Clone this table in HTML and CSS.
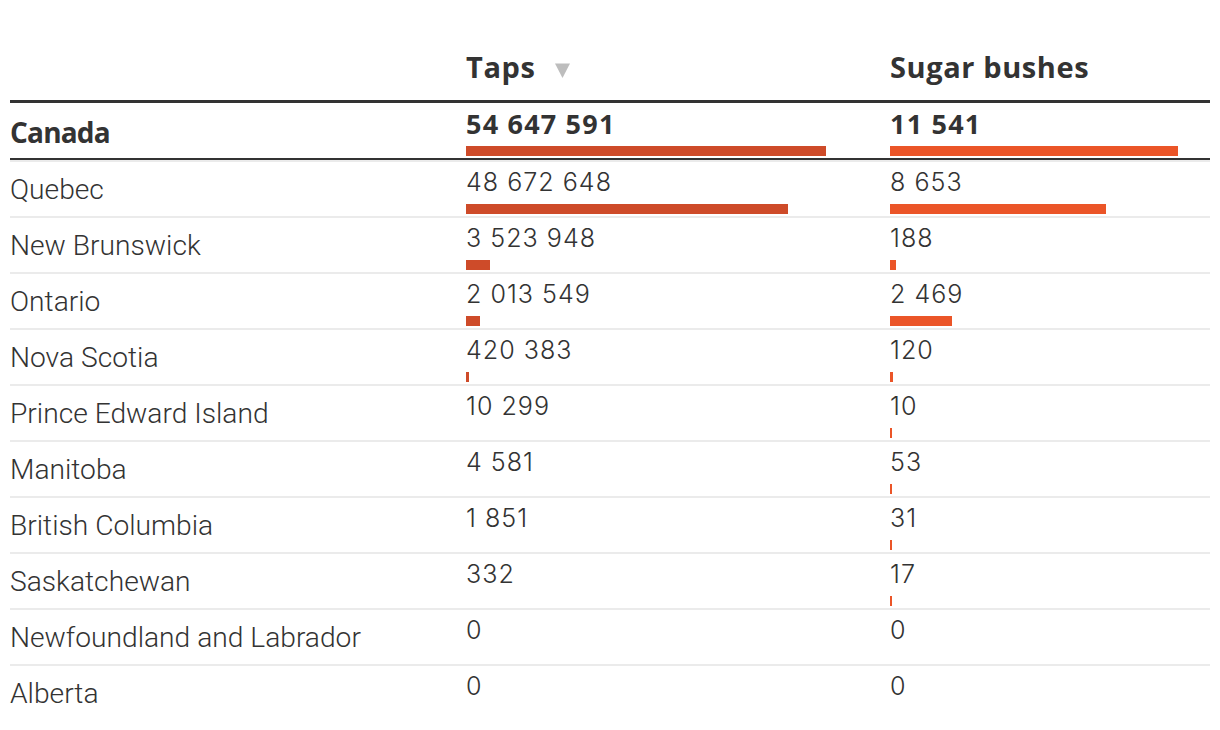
FILE: index.html
```html
<!DOCTYPE html>
<html lang="en">
<head>
<meta charset="utf-8">
<title>Maple syrup production by province</title>
<link rel="stylesheet" href="styles.css">
</head>
<body>
<div class="table">
  <div class="row head">
    <div class="cell"></div>
    <div class="cell th">Taps<svg class="sort" width="15" height="15" viewBox="0 0 15 15" aria-hidden="true"><path d="M0 0.5H15L7.5 15Z" fill="#bdbdbd"/></svg></div>
    <div class="cell th">Sugar bushes</div>
  </div>
  <div class="row total">
    <div class="cell label">Canada</div>
    <div class="cell num"><div class="val">54 647 591</div><div class="bar taps" style="width:360px"></div></div>
    <div class="cell num"><div class="val">11 541</div><div class="bar sugar" style="width:288px"></div></div>
  </div>
  <div class="row">
    <div class="cell label">Quebec</div>
    <div class="cell num"><div class="val">48 672 648</div><div class="bar taps" style="width:322px"></div></div>
    <div class="cell num"><div class="val">8 653</div><div class="bar sugar" style="width:216px"></div></div>
  </div>
  <div class="row">
    <div class="cell label">New Brunswick</div>
    <div class="cell num"><div class="val">3 523 948</div><div class="bar taps" style="width:24px"></div></div>
    <div class="cell num"><div class="val">188</div><div class="bar sugar" style="width:6px"></div></div>
  </div>
  <div class="row">
    <div class="cell label">Ontario</div>
    <div class="cell num"><div class="val">2 013 549</div><div class="bar taps" style="width:14px"></div></div>
    <div class="cell num"><div class="val">2 469</div><div class="bar sugar" style="width:62px"></div></div>
  </div>
  <div class="row">
    <div class="cell label">Nova Scotia</div>
    <div class="cell num"><div class="val">420 383</div><div class="bar taps" style="width:3px"></div></div>
    <div class="cell num"><div class="val">120</div><div class="bar sugar" style="width:3px"></div></div>
  </div>
  <div class="row">
    <div class="cell label">Prince Edward Island</div>
    <div class="cell num"><div class="val">10 299</div><div class="bar taps" style="width:0px"></div></div>
    <div class="cell num"><div class="val">10</div><div class="bar sugar" style="width:2px"></div></div>
  </div>
  <div class="row">
    <div class="cell label">Manitoba</div>
    <div class="cell num"><div class="val">4 581</div><div class="bar taps" style="width:0px"></div></div>
    <div class="cell num"><div class="val">53</div><div class="bar sugar" style="width:2px"></div></div>
  </div>
  <div class="row">
    <div class="cell label">British Columbia</div>
    <div class="cell num"><div class="val">1 851</div><div class="bar taps" style="width:0px"></div></div>
    <div class="cell num"><div class="val">31</div><div class="bar sugar" style="width:2px"></div></div>
  </div>
  <div class="row">
    <div class="cell label">Saskatchewan</div>
    <div class="cell num"><div class="val">332</div><div class="bar taps" style="width:0px"></div></div>
    <div class="cell num"><div class="val">17</div><div class="bar sugar" style="width:2px"></div></div>
  </div>
  <div class="row">
    <div class="cell label">Newfoundland and Labrador</div>
    <div class="cell num"><div class="val">0</div><div class="bar taps" style="width:0px"></div></div>
    <div class="cell num"><div class="val">0</div><div class="bar sugar" style="width:0px"></div></div>
  </div>
  <div class="row">
    <div class="cell label">Alberta</div>
    <div class="cell num"><div class="val">0</div><div class="bar taps" style="width:0px"></div></div>
    <div class="cell num"><div class="val">0</div><div class="bar sugar" style="width:0px"></div></div>
  </div>
</div>
</body>
</html>
```
FILE: styles.css
```css
html, body {
  margin: 0;
  padding: 0;
  background: #ffffff;
}
body {
  color: #333333;
  font-family: "Roboto", "Liberation Sans", sans-serif;
}
.table {
  width: 1200px;
  margin: 0 10px;
}
.row {
  display: grid;
  grid-template-columns: 456px 424px 320px;
  height: 56px;
  box-sizing: border-box;
  border-top: 2px solid #ebebeb;
}
.cell {
  box-sizing: border-box;
}
.row.head {
  height: 103px;
  border-top: 0;
  border-bottom: 3px solid #333333;
}
.th {
  display: flex;
  align-items: flex-end;
  padding-top: 52px;
  font-family: "Open Sans", "Liberation Sans", sans-serif;
  font-weight: 700;
  font-size: 29px;
  line-height: 30px;
  letter-spacing: 0.6px;
  height: 82px;
}
.th .sort {
  margin-left: 20px;
  margin-bottom: 4.5px;
}
.label {
  font-family: "Roboto", sans-serif;
  font-weight: 300;
  font-size: 28.2px;
  line-height: 30px;
  padding-top: 13px;
  white-space: nowrap;
}
.num {
  padding-top: 5px;
}
.val {
  font-family: "Inter", sans-serif;
  font-weight: 300;
  font-size: 25.1px;
  line-height: 30px;
  letter-spacing: 1px;
  white-space: nowrap;
}
.bar {
  height: 10px;
  margin-top: 7px;
}
.bar.taps { background: #ce4b29; }
.bar.sugar { background: #eb5528; }

.row.total {
  height: 57px;
  border-top: 0;
  border-bottom: 2px solid #333333;
}
.total .label {
  font-family: "Open Sans", sans-serif;
  font-weight: 700;
  font-size: 28px;
  letter-spacing: -0.8px;
  padding-top: 14px;
}
.total .num {
  padding-top: 6px;
}
.total .val {
  font-family: "Open Sans", sans-serif;
  font-weight: 700;
  font-size: 27px;
  letter-spacing: 1.2px;
}
```
